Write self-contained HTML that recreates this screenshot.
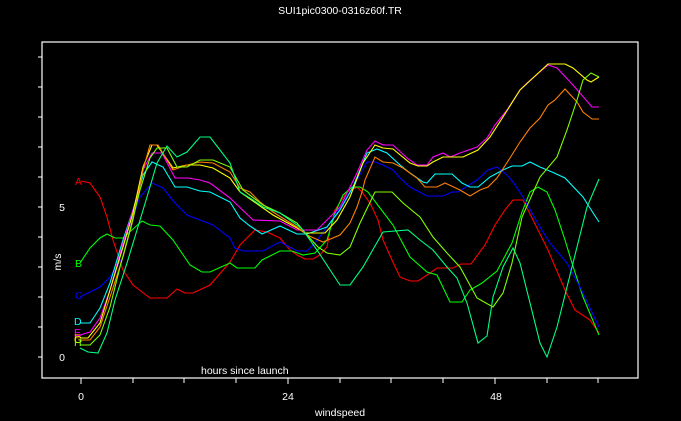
<!DOCTYPE html>
<html><head><meta charset="utf-8"><style>
html,body{margin:0;padding:0;background:#000;width:681px;height:421px;overflow:hidden}
svg{display:block}
text{font-family:"Liberation Sans",sans-serif;fill:#fff;font-size:10.5px}
polyline{fill:none;stroke-width:1.1}
</style></head><body>
<svg width="681" height="421" viewBox="0 0 681 421" xmlns="http://www.w3.org/2000/svg">
<text x="340" y="14" text-anchor="middle">SUI1pic0300-0316z60f.TR</text>
<rect x="42" y="42" width="596" height="336" fill="none" stroke="#fff" stroke-width="1.2"/>
<g stroke="#fff" stroke-width="1">
<line x1="38" y1="57" x2="42" y2="57"/><line x1="38" y1="87" x2="42" y2="87"/><line x1="38" y1="117" x2="42" y2="117"/><line x1="38" y1="147" x2="42" y2="147"/><line x1="38" y1="177" x2="42" y2="177"/><line x1="38" y1="207" x2="42" y2="207"/><line x1="38" y1="237" x2="42" y2="237"/><line x1="38" y1="267" x2="42" y2="267"/><line x1="38" y1="297" x2="42" y2="297"/><line x1="38" y1="327" x2="42" y2="327"/><line x1="38" y1="357" x2="42" y2="357"/>
<line x1="81" y1="378" x2="81" y2="384"/><line x1="133" y1="378" x2="133" y2="383"/><line x1="184" y1="378" x2="184" y2="383"/><line x1="236" y1="378" x2="236" y2="383"/><line x1="288" y1="378" x2="288" y2="384"/><line x1="340" y1="378" x2="340" y2="383"/><line x1="391" y1="378" x2="391" y2="383"/><line x1="443" y1="378" x2="443" y2="383"/><line x1="495" y1="378" x2="495" y2="384"/><line x1="547" y1="378" x2="547" y2="383"/><line x1="598" y1="378" x2="598" y2="383"/>
</g>
<text x="62" y="211" text-anchor="middle">5</text>
<text x="62" y="361" text-anchor="middle">0</text>
<text x="0" y="0" text-anchor="middle" transform="translate(61,262) rotate(-90)">m/s</text>
<text x="81" y="400" text-anchor="middle">0</text>
<text x="288" y="400" text-anchor="middle">24</text>
<text x="496" y="400" text-anchor="middle">48</text>
<text x="340" y="416" text-anchor="middle">windspeed</text>
<text x="201" y="374">hours since launch</text>

<polyline stroke="#ff0000" points="81,181 90,183 100,197 107,217 113,240 123,270 133,285 150,298 167,298 177,289 185,293 193,293 210,285 230,262 240,245 255,230 267,232 280,238 290,250 297,255 305,259 313,259 320,255 327,247 330,230 335,210 347,192 357,187 362,192 370,203 378,220 383,240 392,260 400,277 410,281 418,281 430,273 437,268 453,268 461,264 471,264 485,245 495,225 505,210 513,200 523,200 548,250 565,290 575,310 590,320 599,333"/>
<polyline stroke="#00ff00" points="80,263 90,248 100,238 107,234 115,238 123,238 132,230 142,221 150,225 160,226 173,240 190,265 202,272 210,272 230,263 237,268 255,268 262,260 280,251 292,251 303,255 315,253 327,240 335,213 343,195 352,187 360,187 368,192 380,208 393,225 410,257 427,272 437,275 450,302 462,302 470,290 482,283 497,271 512,243 522,212 530,192 538,187 547,192 555,210 565,240 572,263 583,297 599,335"/>
<polyline stroke="#0000ff" points="80,297 90,292 100,287 110,277 123,257 133,217 140,197 152,183 163,188 175,203 187,215 200,220 213,225 230,238 235,248 243,251 263,251 280,242 297,251 307,251 315,243 327,227 340,208 353,187 367,162 375,162 383,165 393,170 400,178 410,187 427,196 443,196 452,192 458,192 477,180 488,170 497,167 507,175 513,182 523,197 540,227 550,243 567,263 580,287 599,327"/>
<polyline stroke="#00ffff" points="80,323 90,323 100,308 110,283 123,240 133,210 143,175 152,162 163,167 175,187 187,187 200,191 210,192 230,202 240,218 250,226 262,234 280,226 297,234 307,234 327,227 340,210 353,187 367,153 377,149 387,153 400,165 410,173 423,182 427,183 435,174 452,174 462,183 470,187 478,187 490,177 503,170 512,166 522,166 530,162 540,167 552,172 565,178 583,197 588,205 599,222"/>
<polyline stroke="#ff00ff" points="80,335 90,332 100,318 110,290 123,243 137,197 143,170 152,153 162,153 175,178 188,178 200,180 210,183 230,198 253,220 280,221 297,230 317,230 327,220 340,207 357,173 367,150 375,141 383,145 393,145 407,158 417,165 427,165 433,157 443,153 450,157 460,153 477,147 487,138 495,125 507,110 520,90 527,83 548,65 557,68 573,85 592,107 599,107"/>
<polyline stroke="#ffff00" points="80,338 88,338 100,323 110,290 123,247 133,213 143,167 152,145 157,145 173,168 187,165 200,165 213,168 230,178 240,192 273,215 297,228 305,233 325,233 337,220 350,197 363,163 375,145 383,148 393,149 410,163 418,166 427,166 433,162 443,157 463,157 478,150 490,137 503,117 520,90 548,64 565,64 573,68 587,80 591,82 599,77"/>
<polyline stroke="#ff8000" points="80,340 90,340 100,327 110,297 123,257 133,220 143,170 150,145 158,145 173,170 187,165 200,162 213,163 230,172 240,188 250,192 260,202 273,212 297,227 307,235 323,242 340,235 350,223 357,207 362,192 365,180 375,157 383,162 393,163 403,168 417,178 425,187 437,187 445,183 460,190 470,196 480,190 488,187 497,178 510,158 520,142 530,128 540,118 548,105 555,100 565,89 577,102 583,112 592,119 599,119"/>
<polyline stroke="#80ff00" points="80,345 90,345 100,335 110,307 120,267 130,230 140,190 150,158 157,148 167,148 177,167 187,167 200,160 213,160 230,167 243,190 263,205 280,213 297,223 307,235 318,247 327,253 340,255 350,247 360,223 375,192 392,192 403,203 420,217 433,237 447,253 460,267 477,298 493,307 503,293 512,263 522,217 540,177 557,157 567,130 577,100 583,80 591,73 599,77"/>
<polyline stroke="#00ff80" points="80,348 88,352 98,353 107,333 115,300 127,263 137,230 147,197 157,163 167,146 177,157 187,152 200,137 210,137 230,163 240,192 253,200 263,207 280,213 297,225 303,230 317,250 340,285 350,285 363,267 383,232 408,230 420,240 433,250 447,267 457,278 467,303 478,343 487,336 493,297 503,267 513,248 520,263 530,303 540,343 547,357 557,327 573,263 587,207 599,179"/>

<text x="75" y="185" style="fill:#ff0000">A</text>
<text x="75" y="267" style="fill:#00ff00">B</text>
<text x="75" y="299" style="fill:#0000ff">C</text>
<text x="74" y="325" style="fill:#00ffff">D</text>
<text x="74" y="336" style="fill:#ff00ff">E</text>
<text x="74" y="341" style="fill:#ff8000">F</text>
<text x="74" y="343" style="fill:#ffff00">G</text>
<text x="74" y="346" style="fill:#80ff00">H</text>
</svg>
</body></html>
